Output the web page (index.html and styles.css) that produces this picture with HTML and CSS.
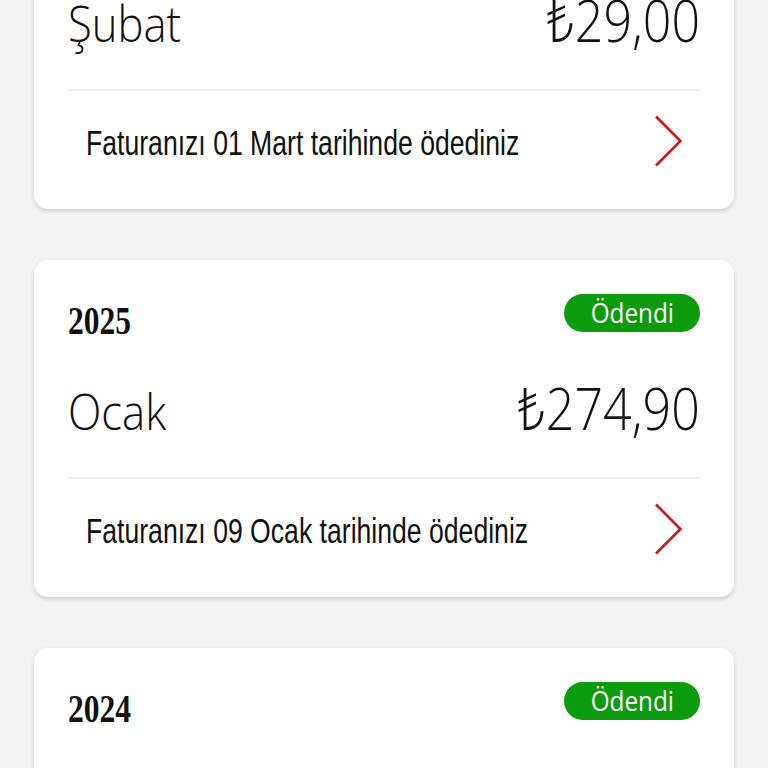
FILE: index.html
```html
<!DOCTYPE html>
<html lang="tr">
<head>
<meta charset="utf-8">
<title>Faturalar</title>
<link rel="stylesheet" href="styles.css">
</head>
<body>
<div class="list">
  <div class="card">
    <div class="card-head">
      <span class="year">2025</span>
      <span class="badge"><span class="badge-text">Ödendi</span></span>
    </div>
    <div class="card-main">
      <span class="month">Şubat</span>
      <span class="amount">₺29,00</span>
    </div>
    <div class="divider"></div>
    <div class="card-foot">
      <span class="foot-text">Faturanızı 01 Mart tarihinde ödediniz</span>
      <svg class="chev" width="28" height="52" viewBox="0 0 28 52"><polyline points="2,1.5 26.5,26 2,50.5" fill="none" stroke="#d3131c" stroke-width="2.6"/></svg>
    </div>
  </div>
  <div class="card">
    <div class="card-head">
      <span class="year">2025</span>
      <span class="badge"><span class="badge-text">Ödendi</span></span>
    </div>
    <div class="card-main">
      <span class="month">Ocak</span>
      <span class="amount">₺274,90</span>
    </div>
    <div class="divider"></div>
    <div class="card-foot">
      <span class="foot-text">Faturanızı 09 Ocak tarihinde ödediniz</span>
      <svg class="chev" width="28" height="52" viewBox="0 0 28 52"><polyline points="2,1.5 26.5,26 2,50.5" fill="none" stroke="#d3131c" stroke-width="2.6"/></svg>
    </div>
  </div>
  <div class="card">
    <div class="card-head">
      <span class="year">2024</span>
      <span class="badge"><span class="badge-text">Ödendi</span></span>
    </div>
    <div class="card-main">
      <span class="month">Aralık</span>
      <span class="amount">₺274,90</span>
    </div>
    <div class="divider"></div>
    <div class="card-foot">
      <span class="foot-text">Faturanızı 09 Aralık tarihinde ödediniz</span>
      <svg class="chev" width="28" height="52" viewBox="0 0 28 52"><polyline points="2,1.5 26.5,26 2,50.5" fill="none" stroke="#d3131c" stroke-width="2.6"/></svg>
    </div>
  </div>
</div>
</body>
</html>
```

FILE: styles.css
```css
html, body {
  margin: 0;
  padding: 0;
  background: #f3f3f3;
}
body {
  font-family: "Open Sans", "Noto Sans", sans-serif;
  color: #111;
  overflow: hidden;
}
.list {
  display: flex;
  flex-direction: column;
  gap: 51px;
  padding: 0 34px;
  margin-top: -128px;
}
.card {
  background: #fff;
  border-radius: 14px;
  padding: 34px 34px 19px;
  box-shadow: 0 2px 4px rgba(0, 0, 0, 0.16);
}
.card-head {
  display: flex;
  justify-content: space-between;
  align-items: center;
  height: 38px;
}
.year {
  display: inline-block;
  font-family: "Liberation Serif", serif;
  font-weight: bold;
  font-size: 41px;
  line-height: 38px;
  transform: scaleX(0.77);
  transform-origin: left center;
  color: #111;
  padding-top: 13px;
}
.badge {
  display: flex;
  justify-content: center;
  align-items: center;
  width: 136px;
  height: 38px;
  border-radius: 19px;
  background: #0c9b0c;
}
.badge-text {
  display: inline-block;
  color: #fff;
  font-family: "Open Sans", "Noto Sans", sans-serif;
  font-size: 27px;
  line-height: 36px;
  transform: scaleX(0.9);
}
.card-main {
  display: flex;
  justify-content: space-between;
  align-items: baseline;
  margin-top: 40px;
  height: 70px;
}
.month {
  display: inline-block;
  font-weight: 300;
  font-size: 49px;
  line-height: 70px;
  transform: scaleX(0.89);
  transform-origin: left center;
}
.amount {
  display: inline-block;
  font-weight: 300;
  font-size: 59px;
  line-height: 70px;
  transform: scaleX(0.85);
  transform-origin: right center;
}
.divider {
  height: 2px;
  background: #eeeeee;
  margin-top: 35px;
}
.card-foot {
  display: flex;
  align-items: center;
  height: 99px;
  padding: 0 18px;
}
.foot-text {
  flex: 1 1 0;
  min-width: 0;
  display: inline-block;
  font-family: "Liberation Sans", sans-serif;
  font-size: 35px;
  white-space: nowrap;
  transform: scaleX(0.76);
  transform-origin: left center;
  color: #111;
  padding-top: 4px;
}
.chev {
  display: block;
  flex: none;
}
```
